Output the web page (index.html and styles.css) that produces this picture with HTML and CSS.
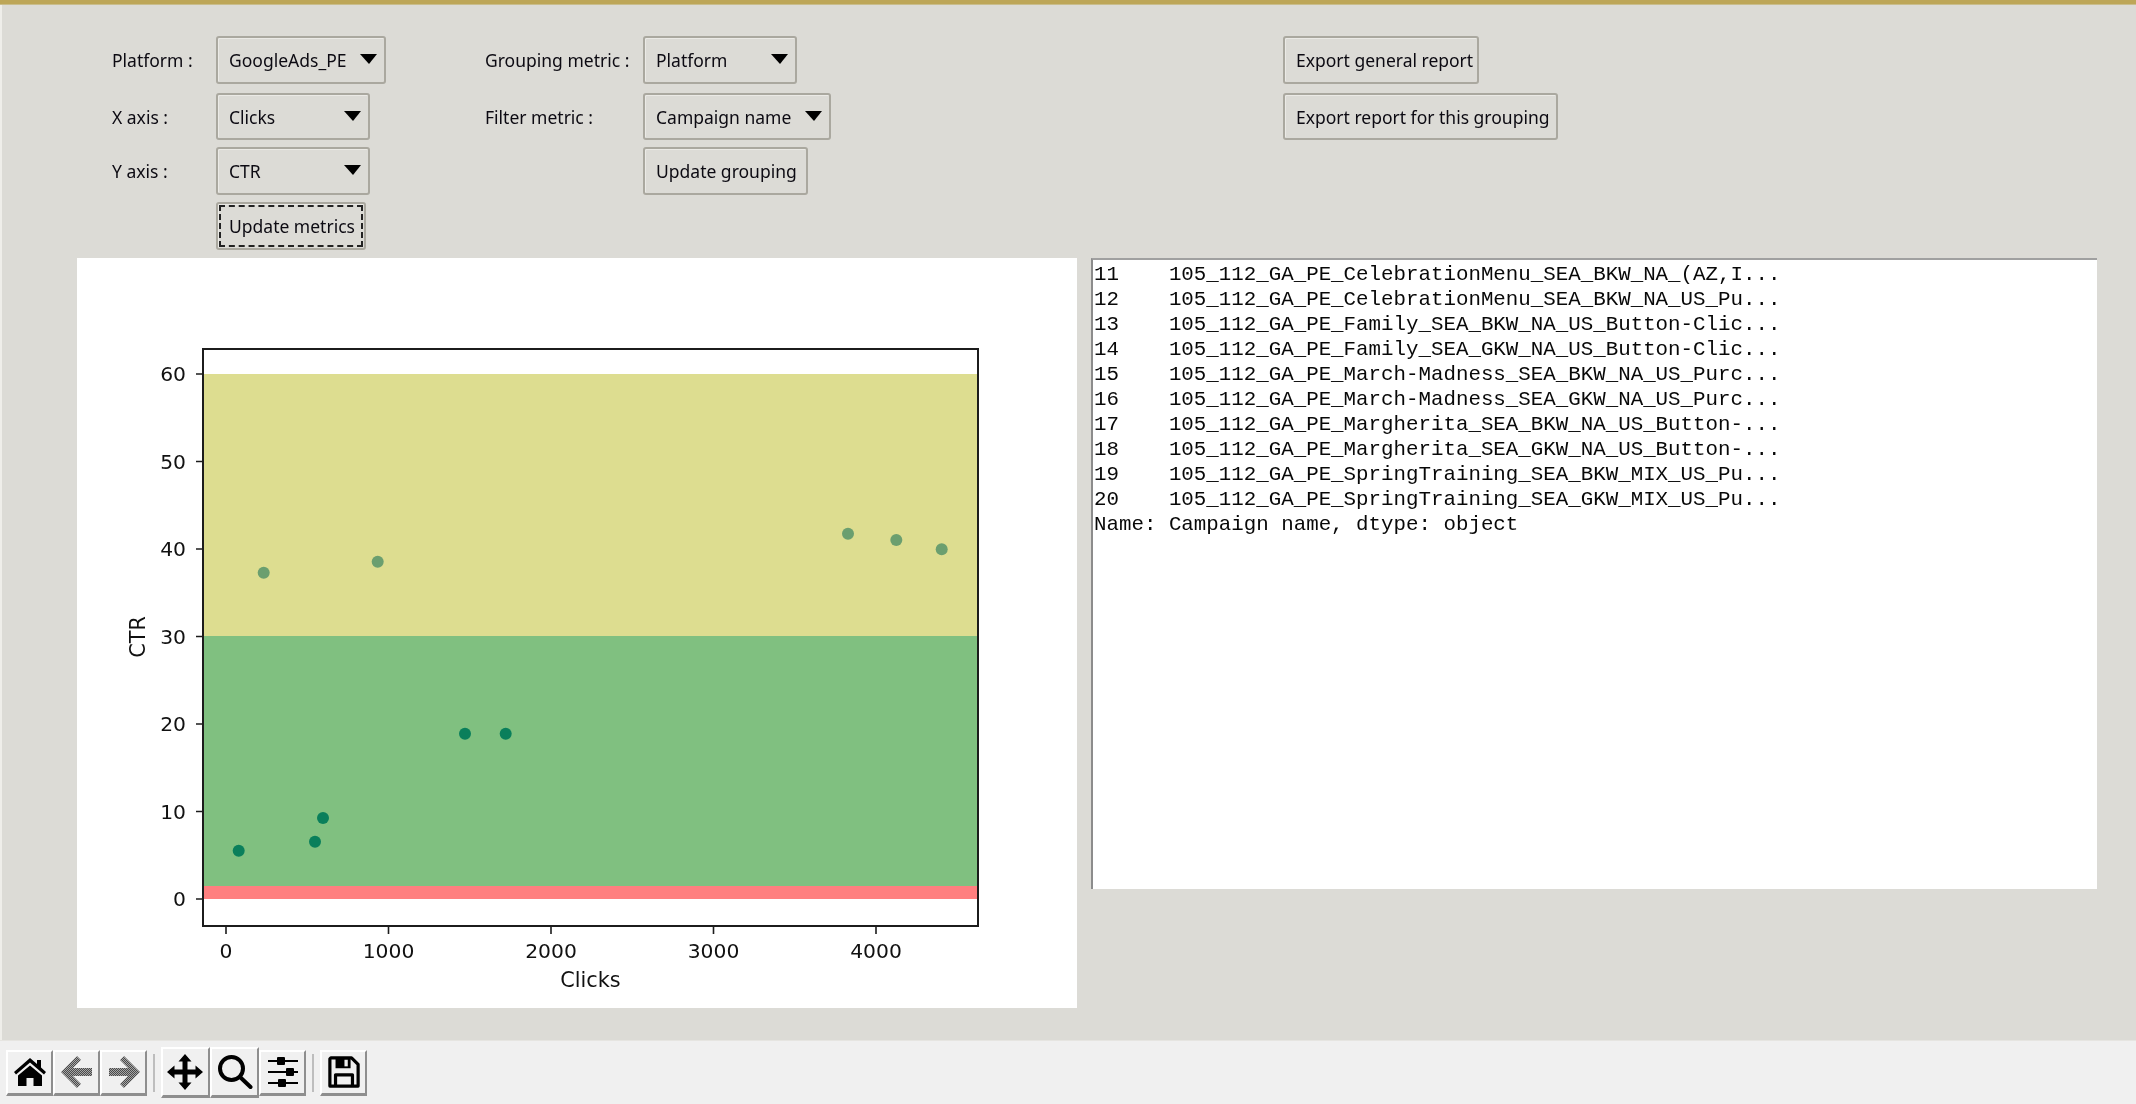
FILE: index.html
```html
<!DOCTYPE html>
<html lang="en">
<head>
<meta charset="utf-8">
<title>Campaign metrics</title>
<link rel="stylesheet" href="styles.css">
</head>
<body>
<div class="app">
  <div class="titleline"></div>
  <div class="workspace">
    <div class="controls">
      <span class="label r1 c1">Platform :</span>
      <div class="combo r1 c2 w-platform"><span>GoogleAds_PE</span><i class="arrow"></i></div>
      <span class="label r1 c3">Grouping metric :</span>
      <div class="combo r1 c4 w-grouping"><span>Platform</span><i class="arrow"></i></div>
      <button class="btn r1 c5 w-export1">Export general report</button>

      <span class="label r2 c1">X axis :</span>
      <div class="combo r2 c2 w-axis short"><span>Clicks</span><i class="arrow"></i></div>
      <span class="label r2 c3">Filter metric :</span>
      <div class="combo r2 c4 w-filter short"><span>Campaign name</span><i class="arrow"></i></div>
      <button class="btn r2 c5 w-export2 short">Export report for this grouping</button>

      <span class="label r3 c1">Y axis :</span>
      <div class="combo r3 c2 w-axis"><span>CTR</span><i class="arrow"></i></div>
      <button class="btn r3 c4 w-update-g">Update grouping</button>

      <button class="btn focused r4 c2 w-update-m">Update metrics</button>
    </div>

    <div class="main">
      <svg class="plot" width="1000" height="750" viewBox="0 0 1000 750" role="img" aria-label="CTR by Clicks">
        <rect class="band-yellow" x="127" y="116" width="774" height="262"/>
        <rect class="band-green" x="127" y="378" width="774" height="250"/>
        <rect class="band-red" x="127" y="628" width="774" height="13"/>
        <g class="pt-low">
          <circle cx="161.7" cy="592.7" r="6"/>
          <circle cx="238" cy="583.7" r="6"/>
          <circle cx="246" cy="560" r="6"/>
          <circle cx="388" cy="475.7" r="6"/>
          <circle cx="428.7" cy="475.7" r="6"/>
        </g>
        <g class="pt-high">
          <circle cx="186.7" cy="314.7" r="6"/>
          <circle cx="300.7" cy="303.7" r="6"/>
          <circle cx="771" cy="275.7" r="6"/>
          <circle cx="819.3" cy="282" r="6"/>
          <circle cx="864.7" cy="291.3" r="6"/>
        </g>
        <rect class="frame" x="126" y="91" width="775" height="577"/>
        <g class="ticks">
          <path d="M119 641h7M119 553.500h7M119 466h7M119 378.500h7M119 291h7M119 203.500h7M119 116h7"/>
          <path d="M149 668v8M311.500 668v8M474 668v8M636.500 668v8M799 668v8"/>
        </g>
        <g class="tick-y">
          <text x="109" y="648">0</text>
          <text x="109" y="560.500">10</text>
          <text x="109" y="473">20</text>
          <text x="109" y="385.500">30</text>
          <text x="109" y="298">40</text>
          <text x="109" y="210.500">50</text>
          <text x="109" y="123">60</text>
        </g>
        <g class="tick-x">
          <text x="149" y="700">0</text>
          <text x="311.500" y="700">1000</text>
          <text x="474" y="700">2000</text>
          <text x="636.500" y="700">3000</text>
          <text x="799" y="700">4000</text>
        </g>
        <text class="axis-title" x="513.500" y="729">Clicks</text>
        <text class="axis-title" transform="translate(68 379) rotate(-90)">CTR</text>
      </svg>
      <pre class="output">11    105_112_GA_PE_CelebrationMenu_SEA_BKW_NA_(AZ,I...
12    105_112_GA_PE_CelebrationMenu_SEA_BKW_NA_US_Pu...
13    105_112_GA_PE_Family_SEA_BKW_NA_US_Button-Clic...
14    105_112_GA_PE_Family_SEA_GKW_NA_US_Button-Clic...
15    105_112_GA_PE_March-Madness_SEA_BKW_NA_US_Purc...
16    105_112_GA_PE_March-Madness_SEA_GKW_NA_US_Purc...
17    105_112_GA_PE_Margherita_SEA_BKW_NA_US_Button-...
18    105_112_GA_PE_Margherita_SEA_GKW_NA_US_Button-...
19    105_112_GA_PE_SpringTraining_SEA_BKW_MIX_US_Pu...
20    105_112_GA_PE_SpringTraining_SEA_GKW_MIX_US_Pu...
Name: Campaign name, dtype: object</pre>
    </div>
  </div>

  <div class="toolbar">
    <button class="tool" aria-label="Home">
      <svg width="34" height="32" viewBox="0 0 34 32"><path class="ink" d="M17 2 L24 8 V4 H28 V11.500 L33 16 L31 18.500 L17 6.500 L3 18.500 L1 16 Z"/><path class="ink" d="M17 9.500 L29 19.500 V30 H20.500 V22 H13.500 V30 H5 V19.500 Z"/></svg>
    </button>
    <button class="tool" aria-label="Back">
      <svg width="34" height="34" viewBox="0 0 34 34">
        <defs><pattern id="dither" width="2" height="2" patternUnits="userSpaceOnUse"><rect width="2" height="2" fill="#a6a6a6"/><rect width="1" height="1" fill="#4a4a4a"/><rect x="1" y="1" width="1" height="1" fill="#4a4a4a"/></pattern></defs>
        <path fill="url(#dither)" d="M17 1 L21 5 L13 13 H32 V21 H13 L21 29 L17 33 L1 17 Z"/>
      </svg>
    </button>
    <button class="tool" aria-label="Forward">
      <svg width="34" height="34" viewBox="0 0 34 34">
        <path fill="url(#dither)" d="M17 1 L33 17 L17 33 L13 29 L21 21 H2 V13 H21 L13 5 Z"/>
      </svg>
    </button>
    <span class="sep"></span>
    <button class="tool checked" aria-label="Pan">
      <svg class="icon-pan" width="36" height="36" viewBox="0 0 36 36"><path class="ink" d="M18 0 L24.500 7.500 H20.500 V15.500 H28.500 V11.500 L36 18 L28.500 24.500 V20.500 H20.500 V28.500 H24.500 L18 36 L11.500 28.500 H15.500 V20.500 H7.500 V24.500 L0 18 L7.500 11.500 V15.500 H15.500 V7.500 H11.500 Z"/></svg>
    </button>
    <button class="tool checked" aria-label="Zoom">
      <svg width="36" height="36" viewBox="0 0 36 36"><circle class="line" cx="14.500" cy="14.500" r="11.500"/><path class="line" d="M23 23 L33.500 33"/></svg>
    </button>
    <button class="tool" aria-label="Configure subplots">
      <svg width="34" height="32" viewBox="0 0 34 32"><path class="thin" d="M2 5h30M2 16h30M2 27h30"/><rect class="ink" x="11" y="1" width="8" height="8" rx="1"/><rect class="ink" x="20" y="12" width="8" height="8" rx="1"/><rect class="ink" x="12" y="23" width="8" height="8" rx="1"/></svg>
    </button>
    <span class="sep"></span>
    <button class="tool" aria-label="Save">
      <svg width="32" height="32" viewBox="0 0 34 34"><path class="line-s" d="M3 2 H25 L32 9 V32 H2 V3 Z"/><path class="ink" d="M8 2 H24 V13 H8 Z"/><rect class="hole" x="17.500" y="4" width="3.500" height="7"/><path class="line-s" d="M8 32 V20 H26 V32"/></svg>
    </button>
  </div>
</div>
</body>
</html>
```
FILE: styles.css
```css
* { box-sizing: border-box; }
html, body { margin: 0; padding: 0; background: #dcdbd6; }
.app {
  width: 2136px;
  height: 1104px;
  display: flex;
  flex-direction: column;
  overflow: hidden;
  font-family: "Noto Sans", "Open Sans", sans-serif;
  color: #0c0a12;
  filter: blur(0.45px);
}
.titleline { height: 5px; background: #bda658; border-bottom: 1px solid #c9bd8c; flex: none; }
.workspace { flex: 1; min-height: 0; background: #dcdbd6; border-left: 2px solid #efeeea; }

.controls {
  display: grid;
  grid-template-columns: 104px 269px 158px 640px auto;
  grid-template-rows: 57px 54px 55px 48px;
  justify-content: start;
  padding: 31px 0 0 110px;
  font-size: 17.5px;
}
.r1 { grid-row: 1; } .r2 { grid-row: 2; } .r3 { grid-row: 3; } .r4 { grid-row: 4; }
.c1 { grid-column: 1; } .c2 { grid-column: 2; } .c3 { grid-column: 3; } .c4 { grid-column: 4; } .c5 { grid-column: 5; }

.label { height: 48px; line-height: 49px; white-space: nowrap; }
.combo, .btn {
  height: 48px;
  border: 2px solid #aaa89f;
  border-radius: 3px;
  background: #dcdbd6;
  box-shadow: inset 1px 1px 0 #ebeae6;
  font: inherit;
  color: inherit;
  white-space: nowrap;
}
.short { height: 47px; }
.combo {
  display: flex;
  align-items: center;
  justify-content: space-between;
  padding: 0 7px 0 11px;
}
.btn { padding: 0 0 0 11px; text-align: left; display: block; }
.arrow {
  width: 0; height: 0;
  border-left: 9px solid transparent;
  border-right: 8px solid transparent;
  border-top: 10px solid #000;
  margin-top: -2px;
}
.w-platform { width: 170px; }
.w-axis { width: 154px; }
.w-grouping { width: 154px; }
.w-filter { width: 188px; }
.w-update-g { width: 165px; }
.w-update-m { width: 150px; }
.w-export1 { width: 196px; }
.w-export2 { width: 275px; }
.focused { outline: 2px dashed #222; outline-offset: -5px; }

.main {
  display: flex;
  align-items: flex-start;
  gap: 14px;
  padding: 8px 0 0 75px;
}
.plot { display: block; background: #fff; flex: none; font-family: "DejaVu Sans", sans-serif; }
.band-yellow { fill: #dddd90; }
.band-green { fill: #80c080; }
.band-red { fill: #ff7f7f; }
.pt-low { fill: #0a7f5b; }
.pt-high { fill: #6b9f6f; }
.frame { fill: none; stroke: #1c1c1c; stroke-width: 2; }
.ticks path { stroke: #1c1c1c; stroke-width: 1.6; fill: none; }
.plot text { font-size: 20.3px; fill: #111; }
.plot .axis-title { font-size: 20.8px; }
.tick-y text { text-anchor: end; }
.tick-x text, .axis-title { text-anchor: middle; }

.output {
  width: 1006px;
  height: 631px;
  margin: 0;
  padding: 2px 0 0 1px;
  background: #fff;
  border-left: 2px solid #8c8c8c;
  border-top: 2px solid #a0a0a0;
  font-family: "Liberation Mono", monospace;
  font-size: 20.8px;
  line-height: 25px;
  color: #080808;
  overflow: hidden;
}

.toolbar {
  flex: none;
  height: 64px;
  display: flex;
  align-items: center;
  padding: 0 0 0 6px;
  background: #f0f0f0;
  border-top: 1px solid #e6e5e1;
}
.tool {
  width: 47px;
  height: 46px;
  padding: 0;
  display: flex;
  align-items: center;
  justify-content: center;
  background: #f0f0f0;
  border: 0;
  border-top: 2px solid #fff;
  border-left: 2px solid #fff;
  border-right: 2px solid #8e8e8e;
  border-bottom: 3px solid #8e8e8e;
}
.tool.checked { height: 51px; width: 49px; border-top-color: #fff; }
.icon-pan { margin-right: 2px; }
.sep { width: 2px; height: 38px; margin: 0 6px 0 6px; background: #bdbdbd; flex: none; }
.ink { fill: #000; }
.line { fill: none; stroke: #000; stroke-width: 4; stroke-linecap: round; }
.line-s { fill: none; stroke: #000; stroke-width: 3.4; stroke-linejoin: round; }
.thin { stroke: #000; stroke-width: 2; fill: none; }
.hole { fill: #f0f0f0; }
```
